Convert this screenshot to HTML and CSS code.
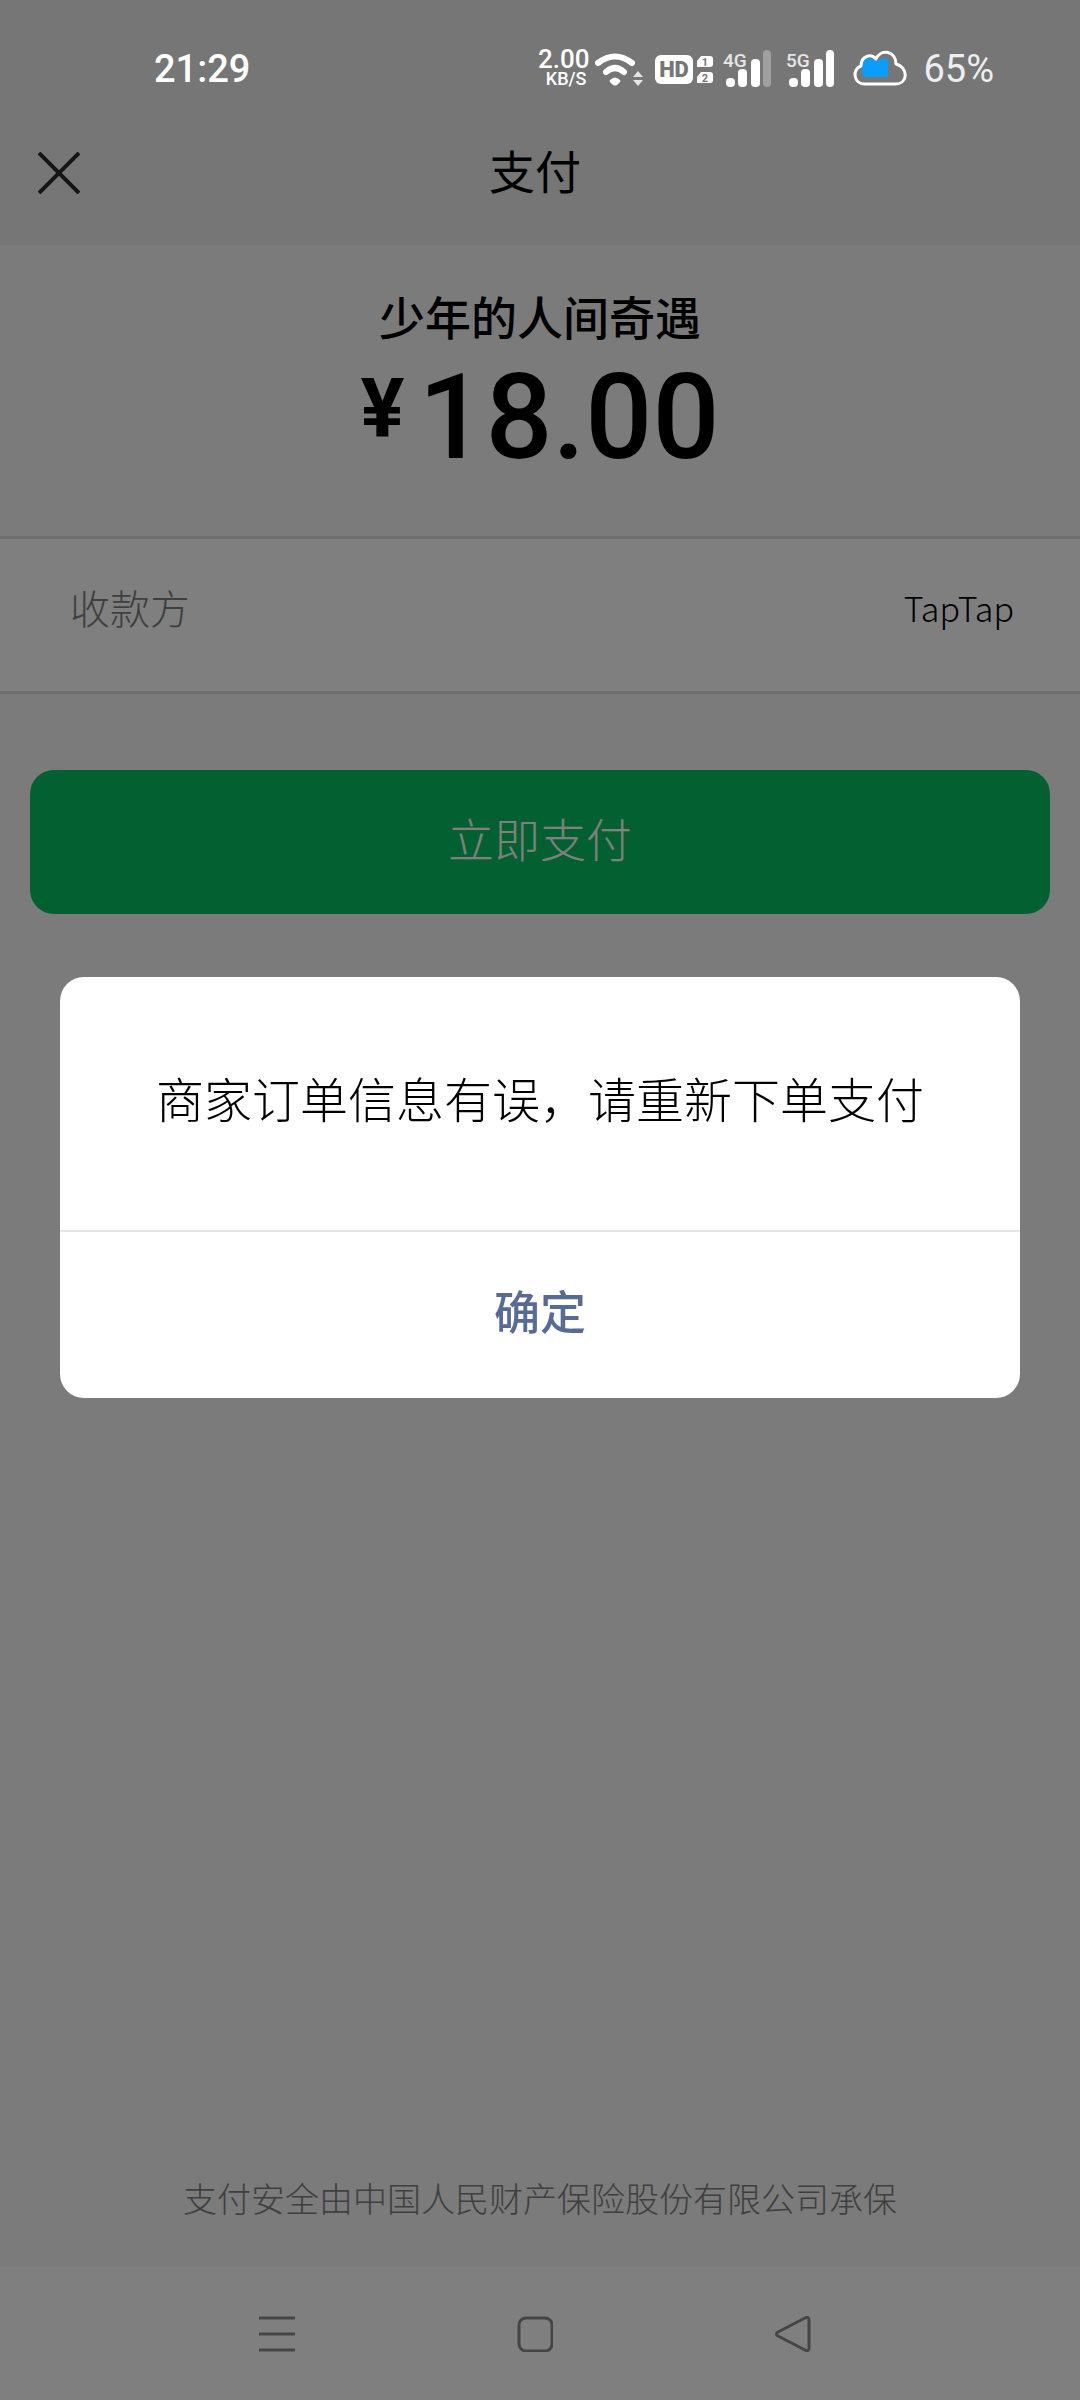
FILE: index.html
```html
<!DOCTYPE html>
<html lang="zh-CN">
<head>
    <meta charset="UTF-8">
    <meta name="viewport" content="width=device-width, initial-scale=1.0">
    <title>支付</title>
    <link rel="stylesheet" href="styles.css">
</head>
<body>

<div class="status-bar">
    <span class="time">21:29</span>
    <div class="status-icons">
        <div class="speed">
            <span class="speed-value">2.00</span>
            <span class="speed-unit">KB/S</span>
        </div>
        <svg class="wifi" width="48" height="38" viewBox="0 0 48 38">
            <g fill="none" stroke="#fff" stroke-width="6" stroke-linecap="round">
                <path d="M3 13 Q20 0 37 13"/>
                <path d="M11 22 Q20 14 29 22"/>
            </g>
            <path d="M15 30 Q20 25 25 30 Q26 31 25 32 L22 35 Q20 36 18 35 L15 32 Q14 31 15 30Z" fill="#fff"/>
            <path d="M43 21 L48 27 H38Z M38 30 H48 L43 36Z" fill="#e6e6e6"/>
        </svg>
        <svg class="hd" width="58" height="38" viewBox="0 0 58 38">
            <rect x="0" y="5" width="38" height="29" rx="6" fill="#fff"/>
            <path d="M46 6 H55 Q58 6 58 9 V14 Q58 17 55 17 H42 V11Z M46 22 H55 Q58 22 58 25 V30 Q58 33 55 33 H42 V27Z" fill="#fff"/>
            <text x="19" y="27" class="hd-label">HD</text>
            <text x="50" y="16" class="sim-label">1</text>
            <text x="50" y="32" class="sim-label">2</text>
        </svg>
        <svg class="signal" width="49" height="38" viewBox="0 0 49 38">
            <text x="0" y="17" class="net-label">4G</text>
            <rect x="3" y="28" width="9" height="9" rx="4" fill="#fff"/>
            <rect x="15" y="19" width="9" height="18" rx="4" fill="#fff"/>
            <rect x="28" y="9" width="9" height="28" rx="4" fill="#fff"/>
            <rect x="40" y="0" width="8" height="37" rx="4" fill="#a0a0a0"/>
        </svg>
        <svg class="signal" width="49" height="38" viewBox="0 0 49 38">
            <text x="0" y="17" class="net-label">5G</text>
            <rect x="3" y="28" width="9" height="9" rx="4" fill="#fff"/>
            <rect x="15" y="19" width="9" height="18" rx="4" fill="#fff"/>
            <rect x="28" y="9" width="9" height="28" rx="4" fill="#fff"/>
            <rect x="40" y="0" width="8" height="37" rx="4" fill="#fff"/>
        </svg>
        <svg class="cloud" width="54" height="38" viewBox="0 0 54 38">
            <path d="M9 13 Q11 8 17 8 L24 11 L30 8 L35 9 V27 H10 Q8 19 9 13Z" fill="#0a9dfc"/>
            <path d="M12 34 C0 34 -1 19 8 16 C8 6 18 3 23 9 C28 -2 43 1 43 14 C55 17 56 34 42 34Z" fill="none" stroke="#fff" stroke-width="3" stroke-linejoin="round"/>
        </svg>
        <span class="battery">65%</span>
    </div>
</div>

<header class="title-bar">
    <button class="close" type="button" aria-label="关闭">
        <svg width="42" height="42" viewBox="0 0 42 42">
            <path d="M1 1 L41 41 M41 1 L1 41" stroke="#2a2a2a" stroke-width="4"/>
        </svg>
    </button>
    <h1>支付</h1>
</header>

<main class="content">
    <div class="order">
        <p class="product">少年的人间奇遇</p>
        <p class="amount"><span class="currency">¥</span><span>18.00</span></p>
    </div>

    <div class="payee">
        <span class="payee-label">收款方</span>
        <span class="payee-name">TapTap</span>
    </div>

    <button class="pay" type="button">立即支付</button>

    <p class="notice">支付安全由中国人民财产保险股份有限公司承保</p>
</main>

<nav class="nav-bar">
    <button type="button" aria-label="菜单">
        <svg width="36" height="36" viewBox="0 0 36 36">
            <path d="M0 2 H36 M0 18 H36 M0 34 H36" stroke="#8a8a8a" stroke-width="3"/>
        </svg>
    </button>
    <button type="button" aria-label="主页">
        <svg width="36" height="36" viewBox="0 0 36 36">
            <rect x="2" y="2" width="33" height="33" rx="7" fill="none" stroke="#8a8a8a" stroke-width="3"/>
        </svg>
    </button>
    <button type="button" aria-label="返回">
        <svg width="36" height="36" viewBox="0 0 36 36">
            <path d="M30 2 Q34 0 34 4 V32 Q34 36 30 34 L3 20 Q0 18 3 16Z" fill="none" stroke="#8a8a8a" stroke-width="3" stroke-linejoin="round"/>
        </svg>
    </button>
</nav>

<div class="mask">
    <div class="dialog" role="alertdialog" aria-modal="true" aria-labelledby="message">
        <p class="message" id="message">商家订单信息有误，请重新下单支付</p>
        <button class="confirm" type="button">确定</button>
    </div>
</div>

</body>
</html>
```

FILE: styles.css
```css
* {
    box-sizing: border-box;
}
body {
    margin: 0;
    min-height: 100vh;
    display: flex;
    flex-direction: column;
    font-family: "Noto Sans CJK SC", sans-serif;
    font-weight: 300;
    background-color: #f6f6f6;
    color: #000;
}
p, h1 {
    margin: 0;
}
button {
    padding: 0;
    border: none;
    background: none;
    font-family: inherit;
    cursor: pointer;
}
svg {
    display: block;
}

/* Status bar: the icons stay bright above the mask */
.status-bar {
    position: relative;
    z-index: 2;
    display: flex;
    justify-content: space-between;
    align-items: center;
    height: 100px;
    padding: 38px 86px 0 154px;
    font-family: Roboto, sans-serif;
    font-weight: 500;
    color: #fff;
    background-color: #767676;
}
.time {
    font-size: 38px;
}
.status-icons {
    display: flex;
    align-items: center;
}
.speed {
    display: flex;
    flex-direction: column;
    align-items: flex-end;
    line-height: 20px;
}
.speed-value {
    font-size: 26px;
}
.speed-unit {
    font-size: 18px;
    padding-right: 3px;
}
.wifi {
    margin-left: 6px;
}
.hd {
    margin-left: 12px;
}
.signal {
    margin-left: 10px;
}
.signal + .signal {
    margin-left: 14px;
}
.cloud {
    margin-left: 18px;
}
.battery {
    margin-left: 16px;
    font-size: 38px;
    font-weight: 400;
    color: #eee;
}
.hd-label {
    font-size: 22px;
    font-weight: 900;
    text-anchor: middle;
    fill: #767676;
}
.sim-label {
    font-size: 11px;
    font-weight: 700;
    text-anchor: middle;
    fill: #767676;
}
.net-label {
    font-size: 19px;
    fill: #e6e6e6;
}

/* Title bar */
.title-bar {
    display: grid;
    grid-template-columns: 80px 1fr 90px;
    align-items: center;
    height: 145px;
    background-color: #ededed;
}
.close {
    padding-left: 38px;
}
.title-bar h1 {
    padding-bottom: 8px;
    font-size: 46px;
    font-weight: 400;
    line-height: 72px;
    text-align: center;
}

/* Payment details */
.content {
    flex: 1;
    display: flex;
    flex-direction: column;
}
.order {
    padding: 34px 0 51px;
    text-align: center;
}
.product {
    font-size: 46px;
    font-weight: 500;
    line-height: 72px;
}
.amount {
    display: flex;
    justify-content: center;
    gap: 14px;
    font-family: Roboto, sans-serif;
    font-size: 118px;
    font-weight: 500;
    line-height: 134px;
}
.currency {
    font-size: 82px;
    font-weight: 700;
    line-height: 114px;
}
.payee {
    display: flex;
    justify-content: space-between;
    align-items: center;
    height: 158px;
    padding: 0 66px 16px 70px;
    border-top: 3px solid #dedede;
    border-bottom: 3px solid #dedede;
    background-color: #fff;
    font-size: 40px;
}
.payee-label {
    color: #7f7f7f;
}
.payee-name {
    font-size: 34px;
}
.pay {
    height: 144px;
    margin: 76px 30px 0;
    padding-bottom: 10px;
    border-radius: 24px;
    background-color: #07c160;
    font-size: 46px;
    font-weight: 300;
    color: #fff;
}
.notice {
    margin-top: auto;
    padding-bottom: 44px;
    font-size: 34px;
    line-height: 50px;
    text-align: center;
    color: #7f7f7f;
}

/* System navigation */
.nav-bar {
    display: grid;
    grid-template-columns: repeat(3, 1fr);
    justify-items: center;
    align-items: center;
    height: 133px;
    padding: 0 158px 0 148px;
    background-color: #fff;
}

/* Dialog */
.mask {
    position: fixed;
    inset: 0;
    z-index: 1;
    display: flex;
    align-items: center;
    padding: 0 60px 25px;
    background-color: rgba(0, 0, 0, 0.5);
}
.dialog {
    flex: 1;
    overflow: hidden;
    border-radius: 24px;
    background-color: #fff;
}
.message {
    padding: 84px 40px 97px;
    font-size: 48px;
    line-height: 72px;
    text-align: center;
}
.confirm {
    width: 100%;
    height: 168px;
    padding-bottom: 12px;
    border-top: 2px solid #e5e5e5;
    font-size: 46px;
    font-weight: 500;
    color: #576b95;
}
```
